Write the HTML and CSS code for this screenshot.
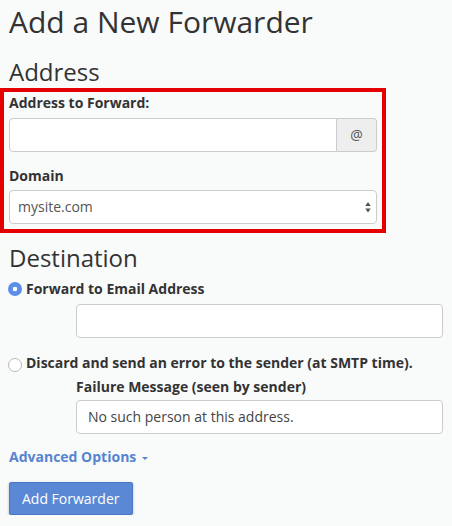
FILE: index.html
```html
<!DOCTYPE html>
<html>
<head>
<meta charset="utf-8">
<link rel="stylesheet" href="styles.css">
</head>
<body>
<div class="page">
  <h1 class="title">Add a New Forwarder</h1>
  <h2 class="section">Address</h2>
  <div class="highlight">
    <div class="label first">Address to Forward:</div>
    <div class="input-group">
      <div class="input grow"></div>
      <span class="addon">@</span>
    </div>
    <div class="label domain">Domain</div>
    <div class="input select">
      <span>mysite.com</span>
      <svg class="arrows" width="6" height="11" viewBox="0 0 6 11"><path d="M3 0 L5.8 4 L0.2 4 Z M0.2 6.5 L5.8 6.5 L3 10.5 Z" fill="#555"/></svg>
    </div>
  </div>
  <h2 class="section dest">Destination</h2>
  <div class="radio-row first-radio">
    <span class="radio checked"></span>
    <span class="label">Forward to Email Address</span>
  </div>
  <div class="indent email"><div class="input"></div></div>
  <div class="radio-row second-radio">
    <span class="radio"></span>
    <span class="label">Discard and send an error to the sender (at SMTP time).</span>
  </div>
  <div class="indent failure-label"><span class="label">Failure Message (seen by sender)</span></div>
  <div class="indent failure"><div class="input text">No such person at this address.</div></div>
  <div class="advanced">Advanced Options <span class="caret"></span></div>
  <div class="actions"><span class="button">Add Forwarder</span></div>
</div>
</body>
</html>
```

FILE: styles.css
```css
html, body {
  margin: 0;
  padding: 0;
  background: #f9fafa;
}
body {
  font-family: "Open Sans", "Liberation Sans", sans-serif;
  color: #333;
  font-size: 14px;
  line-height: 20px;
}
.page {
  padding: 0 9px;
}
.title {
  margin: 5px 0 0;
  font-size: 30px;
  line-height: 33px;
  font-weight: 400;
}
.section {
  margin: 21px 0 0;
  font-size: 24px;
  line-height: 26px;
  font-weight: 400;
}
.section.dest {
  margin-top: 12px;
}
.highlight {
  margin: 3px 0 0 -9px;
  width: 368px;
  border: 4px solid #e40000;
  padding: 1px 5px 5px 5px;
}
.label {
  font-weight: 700;
  font-size: 14px;
  line-height: 20px;
}
.label.first {
  margin-bottom: 5px;
}
.label.domain {
  margin-top: 14px;
  margin-bottom: 4px;
}
.input-group {
  display: flex;
  height: 34px;
}
.input {
  box-sizing: border-box;
  height: 34px;
  background: #fff;
  border: 1px solid #ccc;
  border-radius: 4px;
}
.input-group .input {
  flex: 1;
  border-radius: 4px 0 0 4px;
}
.addon {
  box-sizing: border-box;
  width: 40px;
  display: flex;
  align-items: center;
  justify-content: center;
  background: #eee;
  border: 1px solid #ccc;
  border-left: none;
  border-radius: 0 4px 4px 0;
  color: #555;
  font-size: 14px;
}
.select {
  display: flex;
  align-items: center;
  justify-content: space-between;
  padding: 0 5px 0 8px;
  color: #555;
}
.arrows {
  display: block;
}
.radio-row {
  display: flex;
  align-items: center;
  gap: 4px;
  margin-left: -1px;
}
.first-radio {
  margin-top: 8px;
}
.second-radio {
  margin-top: 15px;
}
.radio {
  box-sizing: border-box;
  width: 14px;
  height: 14px;
  border-radius: 50%;
  border: 1px solid #b9b9b9;
  background: #fff;
  flex: none;
}
.second-radio .radio {
  margin-top: 3px;
}
.radio.checked {
  border: none;
  background: radial-gradient(circle, #fff 0 2px, #5a8ee8 2.6px);
}
.indent {
  margin-left: 67px;
}
.email {
  margin-top: 5px;
}
.failure-label {
  margin-top: 4px;
}
.failure {
  margin-top: 3px;
}
.text {
  padding: 0 11px;
  display: flex;
  align-items: center;
  color: #444;
}
.advanced {
  margin-top: 13px;
  color: #5784d0;
  font-weight: 700;
}
.caret {
  display: inline-block;
  width: 0;
  height: 0;
  border-left: 3px solid transparent;
  border-right: 3px solid transparent;
  border-top: 3px solid #5784d0;
  vertical-align: middle;
  margin-left: 2px;
}
.actions {
  margin-top: 15px;
}
.button {
  display: inline-flex;
  align-items: center;
  box-sizing: border-box;
  height: 33px;
  padding: 0 12px;
  background: #5a88d5;
  border: 1px solid #4a78c6;
  border-radius: 2px;
  color: #fff;
  box-shadow: 0 1px 3px rgba(0, 0, 0, 0.25);
}
```
